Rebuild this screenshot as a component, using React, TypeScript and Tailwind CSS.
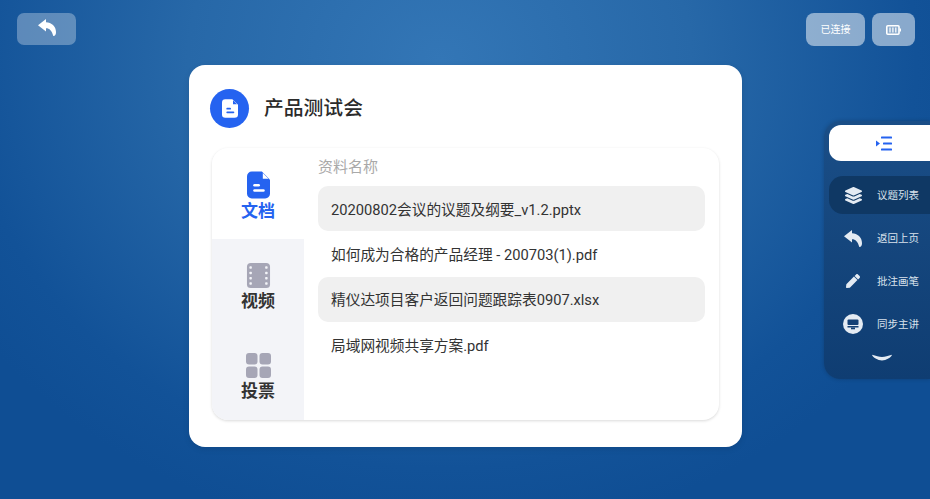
import { FaLayerGroup, FaPen } from 'react-icons/fa';

const files = [
  { name: '20200802会议的议题及纲要_v1.2.pptx', shaded: true },
  { name: '如何成为合格的产品经理 - 200703(1).pdf', shaded: false },
  { name: '精仪达项目客户返回问题跟踪表0907.xlsx', shaded: true },
  { name: '局域网视频共享方案.pdf', shaded: false },
];

function ReplyIcon({ className }: { className: string }) {
  return (
    <svg viewBox="0 0 18 17" className={className} fill="currentColor">
      <path d="M8 0 0 6.300l8 6.200V9.300c3.600 0 5.800 2.500 7.300 7.700 1.200 0 2.700-.5 2.700-4C18 7 13.500 3.500 8 3.200z" />
    </svg>
  );
}

function DocIcon({ className, ink }: { className: string; ink: string }) {
  return (
    <svg viewBox="0 0 24 28" className={className} fill="currentColor">
      <path d="M5 0h10.500L24 8.500V23a5 5 0 0 1-5 5H5a5 5 0 0 1-5-5V5a5 5 0 0 1 5-5z" />
      <path d="M16.500 1.500 22.500 7.500h-6z" fill={ink} />
      <rect x="6.500" y="13" width="7" height="2.600" rx="1.300" fill={ink} />
      <rect x="6.500" y="18.500" width="12" height="2.600" rx="1.300" fill={ink} />
    </svg>
  );
}

function FilmIcon() {
  return (
    <svg viewBox="0 0 24 26" className="h-[25px] w-[25px] text-[#a6a6b6]" fill="currentColor">
      <rect width="24" height="26" rx="4" />
      <g fill="#f3f4f8">
        <rect x="2.500" y="3.500" width="2.600" height="2.600" rx="0.800" />
        <rect x="2.500" y="9" width="2.600" height="2.600" rx="0.800" />
        <rect x="2.500" y="14.500" width="2.600" height="2.600" rx="0.800" />
        <rect x="2.500" y="20" width="2.600" height="2.600" rx="0.800" />
        <rect x="18.900" y="3.500" width="2.600" height="2.600" rx="0.800" />
        <rect x="18.900" y="9" width="2.600" height="2.600" rx="0.800" />
        <rect x="18.900" y="14.500" width="2.600" height="2.600" rx="0.800" />
        <rect x="18.900" y="20" width="2.600" height="2.600" rx="0.800" />
      </g>
    </svg>
  );
}

function GridIcon() {
  return (
    <svg viewBox="0 0 25 25" className="h-[25px] w-[25px] text-[#a6a6b6]" fill="currentColor">
      <rect width="11.500" height="11.500" rx="3" />
      <rect x="13.500" width="11.500" height="11.500" rx="3" />
      <rect y="13.500" width="11.500" height="11.500" rx="3" />
      <rect x="13.500" y="13.500" width="11.500" height="11.500" rx="3" />
    </svg>
  );
}

function BatteryIcon() {
  return (
    <svg viewBox="0 0 15 10" className="h-[10px] w-[15px] text-white" fill="none" stroke="currentColor">
      <rect x="0.800" y="0.800" width="12.200" height="8.400" rx="1" strokeWidth="1.600" />
      <path d="M4 2.500v5M6.900 2.500v5M9.800 2.500v5" strokeWidth="1.200" />
      <path d="M14.300 3.500v3" strokeWidth="1.400" />
    </svg>
  );
}

function IndentIcon() {
  return (
    <svg viewBox="0 0 16 15" className="h-[15px] w-[16px] text-[#2563f0]" fill="currentColor">
      <rect x="5" y="0.500" width="11" height="2" rx="0.600" />
      <rect x="7" y="6.500" width="9" height="2" rx="0.600" />
      <rect x="5" y="12.500" width="11" height="2" rx="0.600" />
      <path d="M0 4.500 4 7.500 0 10.500z" />
    </svg>
  );
}

function ScreenIcon() {
  return (
    <svg viewBox="0 0 20 20" className="h-[20px] w-[20px] text-[#e4ebf3]" fill="currentColor">
      <circle cx="10" cy="10" r="10" />
      <rect x="4.500" y="5.500" width="11" height="5.500" rx="1" fill="#123f75" />
      <rect x="4.500" y="12" width="11" height="1.500" fill="#123f75" />
      <rect x="8" y="13.500" width="4" height="1.800" fill="#123f75" />
    </svg>
  );
}

function SideItem({ label, icon, active }: { label: string; icon: React.ReactNode; active?: boolean }) {
  return (
    <div className={`flex h-[38px] items-center rounded-l-[14px] pl-[14px] ${active ? 'bg-[#0f3864]' : ''}`}>
      <span className="flex w-[20px] items-center justify-center text-[#e4ebf3]">{icon}</span>
      <span className="ml-[14px] pt-[1px] text-[10.500px] text-[#d9e2ec]">{label}</span>
    </div>
  );
}

export default function App() {
  return (
    <div className="h-[499px] w-[930px] overflow-hidden bg-[radial-gradient(ellipse_560px_480px_at_440px_60px,#3376b6_0%,#2768a8_45%,#125298_85%,#0f4e94_100%)] pt-[13px] font-['Roboto','Noto_Sans_CJK_SC',sans-serif]">
      <div className="flex h-[33px] pl-[17px] pr-[15px]">
        <button className="flex h-[32px] w-[59px] items-center justify-center rounded-[7px] bg-white/30 pb-[3px] text-white">
          <ReplyIcon className="h-[17px] w-[18px]" />
        </button>
        <button className="ml-auto h-[33px] w-[59px] rounded-[8px] bg-white/50 text-[10px] text-white">已连接</button>
        <button className="ml-[7px] flex h-[33px] w-[43px] items-center justify-center rounded-[8px] bg-white/50">
          <BatteryIcon />
        </button>
      </div>

      <div className="mt-[19px] flex items-start">
        <div className="ml-[189px] h-[382px] w-[553px] rounded-[16px] bg-white px-[21px] pt-[23px] shadow-[0_2px_6px_rgba(0,0,0,0.1)]">
          <div className="flex h-[40px] items-center">
            <span className="flex h-[39px] w-[39px] items-center justify-center rounded-full bg-[#2563f0] text-white">
              <DocIcon className="h-[19px] w-[16px]" ink="#2563f0" />
            </span>
            <h1 className="ml-[15px] pt-[2px] text-[19.800px] font-medium text-[#2b2b2b]">产品测试会</h1>
          </div>

          <div className="mt-[20px] ml-[2px] flex h-[272px] w-[507px] overflow-hidden rounded-[16px] bg-white shadow-[0_1px_3px_rgba(0,0,0,0.15)]">
            <div className="flex w-[92px] flex-col bg-[#f3f4f8]">
              <div className="flex h-[91px] flex-col items-center justify-center bg-white pt-[5px] text-[#2563f0]">
                <DocIcon className="h-[28px] w-[23px]" ink="#fff" />
                <span className="mt-[1px] text-[17px] leading-[22px] font-bold">文档</span>
              </div>
              <div className="flex h-[91px] flex-col items-center justify-center pt-[5px] text-[#333]">
                <FilmIcon />
                <span className="mt-[2px] text-[17px] leading-[22px] font-bold">视频</span>
              </div>
              <div className="flex h-[90px] flex-col items-center justify-center pt-[5px] text-[#333]">
                <GridIcon />
                <span className="mt-[2px] text-[17px] leading-[22px] font-bold">投票</span>
              </div>
            </div>
            <div className="flex-1 pt-[9px] pr-[14px] pl-[14px]">
              <div className="h-[29px] text-[15px] leading-[20px] text-[#a9a9a9]">资料名称</div>
              <ul>
                {files.map((file) => (
                  <li
                    key={file.name}
                    className={`flex h-[45.400px] items-center rounded-[10px] pt-[2px] pl-[13px] text-[14.700px] text-[#333] ${file.shaded ? 'bg-[#f0f0f0]' : ''}`}
                  >
                    {file.name}
                  </li>
                ))}
              </ul>
            </div>
          </div>
        </div>

        <div className="mt-[56px] ml-auto h-[258px] w-[106px] rounded-l-[16px] bg-gradient-to-b from-[#1a4e87] to-[#0f3d72] pt-[4px] pl-[5px] shadow-[0_0_4px_rgba(0,0,0,0.2)]">
          <div className="flex h-[36px] items-center rounded-l-[12px] bg-white pl-[47px]">
            <IndentIcon />
          </div>
          <div className="mt-[15px] flex flex-col gap-[5px]">
            <SideItem label="议题列表" active icon={<FaLayerGroup size={17} />} />
            <SideItem label="返回上页" icon={<ReplyIcon className="h-[17px] w-[18px]" />} />
            <SideItem label="批注画笔" icon={<FaPen size={14} />} />
            <SideItem label="同步主讲" icon={<ScreenIcon />} />
          </div>
          <div className="mt-[11px] flex pl-[43px] text-[#e4ebf3]">
            <svg viewBox="0 0 20 7" className="h-[7px] w-[20px]" fill="currentColor">
              <path d="M0 .800C4 1.800 7 3 10 3s6-1.200 10-2.200c-.500 2.500-6 5.700-10 5.700S.500 3.300 0 .800z" />
            </svg>
          </div>
        </div>
      </div>
    </div>
  );
}
